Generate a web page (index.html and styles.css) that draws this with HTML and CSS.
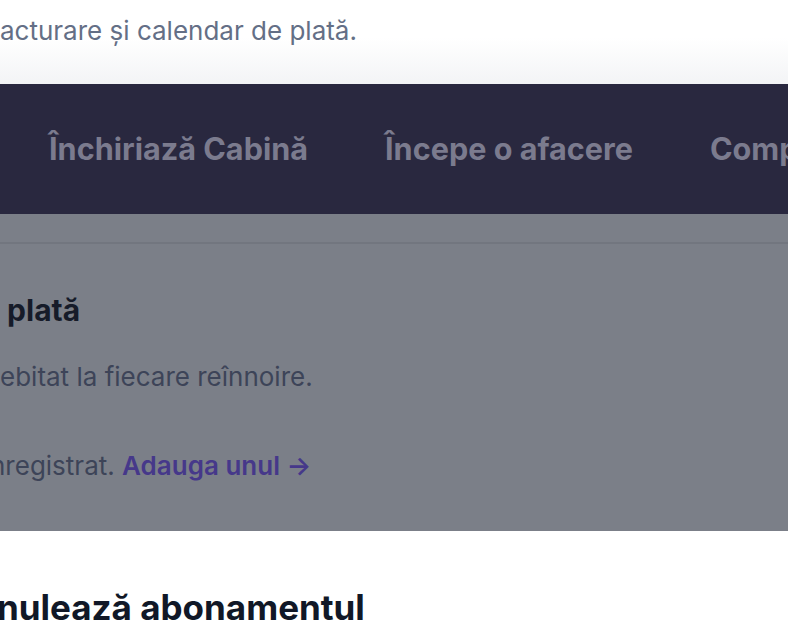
FILE: index.html
```html
<!DOCTYPE html>
<html lang="ro">
<head>
  <meta charset="UTF-8">
  <title>Abonament</title>
  <link rel="stylesheet" href="styles.css">
</head>
<body>

  <!-- Intro -->
  <div class="intro">
    <p>acturare și calendar de plată.</p>
  </div>

  <!-- Nav -->
  <nav class="tabs">
    <a class="tab">Închiriază Cabină</a>
    <a class="tab">Începe o afacere</a>
    <a class="tab">Companie</a>
  </nav>

  <!-- Payment card (dimmed) -->
  <div class="card">
    <div class="card-top"></div>
    <h2>&nbsp;plată</h2>
    <p class="muted">ebitat la fiecare reînnoire.</p>
    <p class="muted cut-more">nregistrat. <a class="add-link">Adauga unul →</a></p>
  </div>

  <!-- Cancel -->
  <div class="cancel">
    <h2 class="cut">nulează abonamentul</h2>
  </div>

</body>
</html>
```

FILE: styles.css
```css
* {
  box-sizing: border-box;
}
body {
  font-family: 'Inter', 'Noto Sans', sans-serif;
  margin: 0;
  padding: 0;
  background: #fff;
  overflow: hidden;
  height: 620px;
}

/* Intro */
.intro {
  height: 84px;
  padding-top: 13px;
  background: linear-gradient(180deg, #ffffff 0%, #ffffff 45%, #f3f4f6 100%);
}
.intro p {
  margin: 0;
  font-size: 26px;
  line-height: 36px;
  color: #646f86;
}

/* Nav */
.tabs {
  height: 130px;
  background: #29283f;
  display: flex;
  align-items: center;
  gap: 77px;
  padding-left: 49px;
  white-space: nowrap;
  overflow: hidden;
}
.tab {
  font-size: 30.6px;
  font-weight: 700;
  color: #7b7b8e;
  line-height: 36px;
}

/* Card */
.card {
  height: 317px;
  background: #7b7f88;
}
.card-top {
  height: 30px;
  border-bottom: 2px solid #72767f;
}
.card h2 {
  margin: 47px 0 0;
  font-size: 30px;
  line-height: 38px;
  font-weight: 700;
  color: #161b29;
}
.muted {
  margin: 0;
  font-size: 26px;
  line-height: 36px;
  color: #3d4458;
}
.card h2 + .muted {
  margin-top: 30px;
}
.muted + .muted {
  margin-top: 53px;
}
.add-link {
  color: #46388a;
  font-weight: 600;
}
.cut {
  text-indent: -3px;
}
.cut-more {
  text-indent: -10px;
}

/* Cancel */
.cancel {
  padding-top: 54px;
}
.cancel h2 {
  margin: 0;
  font-size: 35px;
  line-height: 44px;
  font-weight: 700;
  color: #111827;
}
```
